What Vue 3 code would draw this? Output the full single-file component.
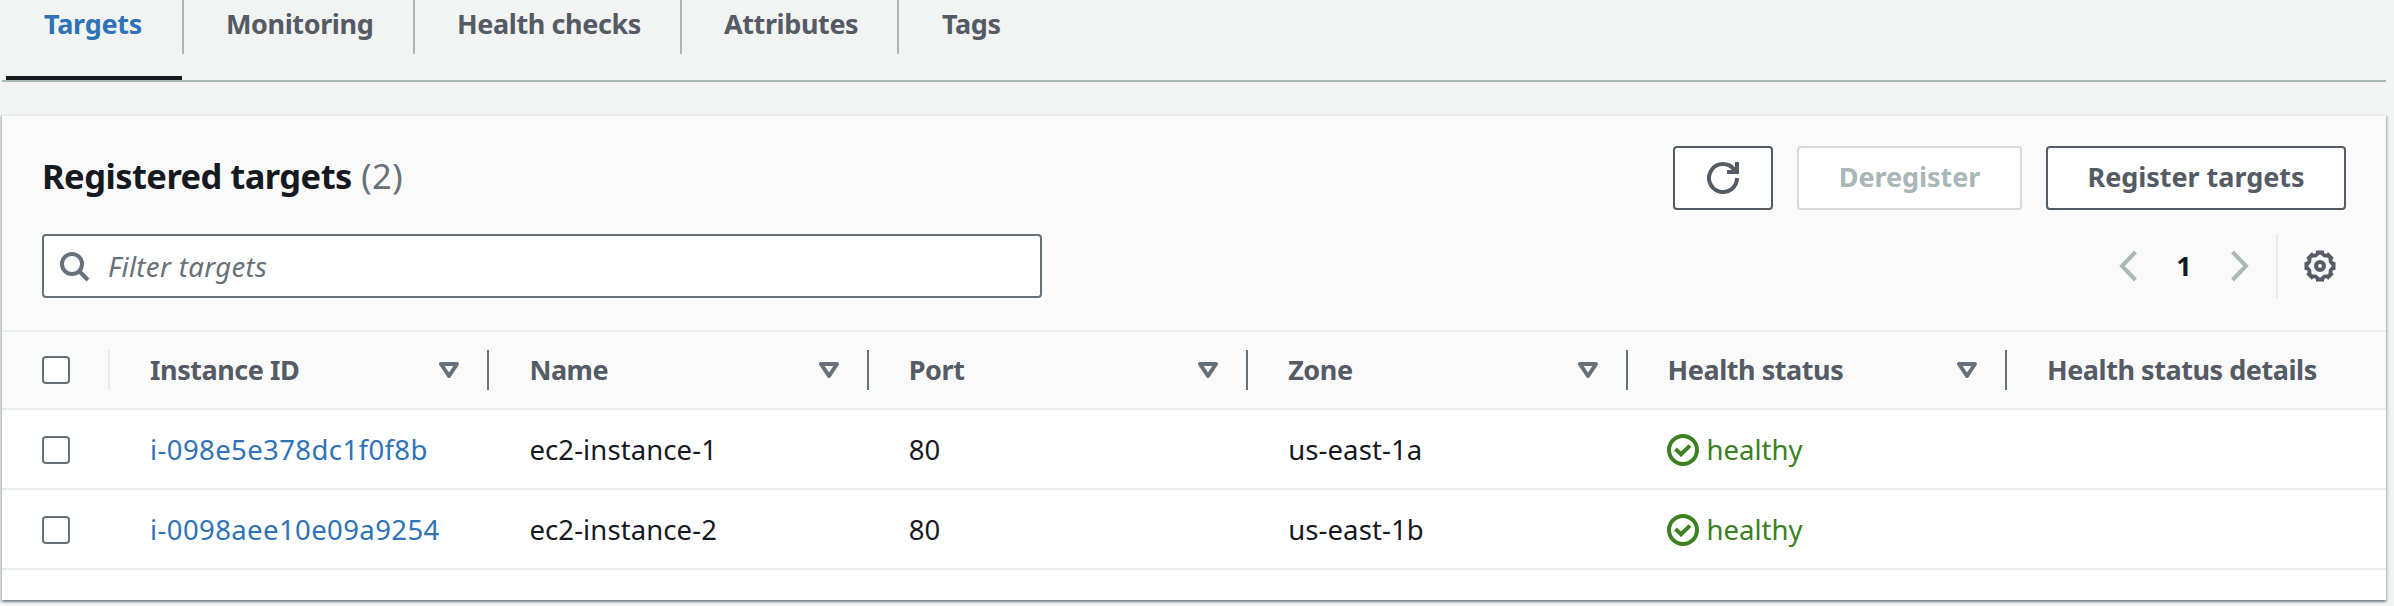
<script setup>
const tabs = ['Targets', 'Monitoring', 'Health checks', 'Attributes', 'Tags']
const columns = ['Instance ID', 'Name', 'Port', 'Zone', 'Health status', 'Health status details']
const targets = [
  { id: 'i-098e5e378dc1f0f8b', name: 'ec2-instance-1', port: 80, zone: 'us-east-1a', status: 'healthy' },
  { id: 'i-0098aee10e09a9254', name: 'ec2-instance-2', port: 80, zone: 'us-east-1b', status: 'healthy' },
]

const point = (radius, degrees) => {
  const a = (degrees * Math.PI) / 180
  return `${(16 + radius * Math.cos(a)).toFixed(2)} ${(16 + radius * Math.sin(a)).toFixed(2)}`
}
const outer = []
const inner = []
for (let a = 0; a < 360; a += 45) {
  outer.push(point(13.6, a - 18), point(16, a - 14), point(16, a + 14), point(13.6, a + 18))
  inner.push(point(11.8, a), point(9.6, a + 22.5))
}
const gearPath = `M${outer.join('L')}ZM${inner.join('L')}Z`
</script>

<template>
  <div class="page">
    <nav class="tabs">
      <a v-for="(tab, i) in tabs" :key="tab" class="tab" :class="{ active: i === 0 }">
        <span class="tab-label">{{ tab }}</span>
      </a>
    </nav>

    <section class="card">
      <header class="head">
        <div class="row">
          <h2 class="title">Registered targets <span class="count">(2)</span></h2>
          <div class="actions">
            <button class="btn refresh" aria-label="Refresh">
              <svg width="32" height="32" viewBox="0 0 32 32" fill="none" stroke="currentColor" stroke-width="4">
                <path d="M30 16A14 14 0 1 1 27.2 7.6" />
                <path d="M30 0V10H20" />
                <path d="M24.5 8.5L29 9.5V6Z" fill="currentColor" stroke="none" />
              </svg>
            </button>
            <button class="btn deregister" disabled><span>Deregister</span></button>
            <button class="btn register"><span>Register targets</span></button>
          </div>
        </div>
        <div class="row filter-row">
          <div class="search">
            <svg width="32" height="32" viewBox="0 0 32 32" fill="none" stroke="currentColor" stroke-width="4">
              <circle cx="13" cy="14" r="10" />
              <path d="M20 21L29 30" />
            </svg>
            <span class="placeholder">Filter targets</span>
          </div>
          <div class="paging">
            <svg class="chev" width="18" height="32" viewBox="0 0 18 32"><path d="M16.5 2L3 16L16.5 30" /></svg>
            <span class="page-no">1</span>
            <svg class="chev" width="18" height="32" viewBox="0 0 18 32"><path d="M1.5 2L15 16L1.5 30" /></svg>
            <span class="settings">
              <svg width="32" height="32" viewBox="0 0 32 32" fill="currentColor">
                <path fill-rule="evenodd" :d="gearPath" />
                <circle cx="16" cy="16" r="4" fill="none" stroke="currentColor" stroke-width="4" />
              </svg>
            </span>
          </div>
        </div>
      </header>

      <div class="grid thead">
        <div class="check"><span class="box"></span></div>
        <div v-for="(c, i) in columns" :key="c" class="th">
          <span>{{ c }}</span>
          <svg v-if="i < 5" class="sort" width="20" height="16" viewBox="0 0 20 16">
            <path d="M2 2H18L10 14Z" />
          </svg>
        </div>
      </div>

      <div v-for="t in targets" :key="t.id" class="grid tr">
        <div class="check"><span class="box"></span></div>
        <div class="td"><a class="link">{{ t.id }}</a></div>
        <div class="td">{{ t.name }}</div>
        <div class="td">{{ t.port }}</div>
        <div class="td">{{ t.zone }}</div>
        <div class="td ok">
          <svg width="32" height="32" viewBox="0 0 32 32" fill="none" stroke="currentColor" stroke-width="4">
            <circle cx="16" cy="16" r="14" />
            <path d="M8.5 15L14 20.2L23 11.6" />
          </svg>
          <span>{{ t.status }}</span>
        </div>
        <div class="td"></div>
      </div>
    </section>
  </div>
</template>

<style>
body { background: #f2f3f3; }
</style>

<style scoped>
.page {
  box-sizing: border-box;
  height: 606px;
  padding: 0 8px 0 2px;
  overflow: hidden;
  background: #f2f3f3;
  color: #16191f;
  font-family: "Noto Sans", "Open Sans", sans-serif;
  font-size: 27.5px;
  font-weight: 450;
  letter-spacing: 0.1px;
}
svg { display: block; flex: none; }
.tabs {
  display: grid;
  grid-template-columns: 178px 231px 267px 217px 140px;
  height: 80px;
  padding-left: 4px;
  border-bottom: 2px solid #aab7b8;
  margin-bottom: 32px;
}
.tab {
  color: #545b64;
  font-size: 27px;
  font-weight: 700;
  letter-spacing: -0.4px;
}
.tab-label {
  display: block;
  box-sizing: border-box;
  height: 54px;
  padding-left: 42px;
  line-height: 47px;
  border-right: 2px solid #aab7b8;
}
.tab:last-child .tab-label { padding-left: 43px; border-right: 0; }
.active .tab-label { padding-left: 38px; letter-spacing: -0.25px; }
.active {
  color: #2e72b8;
  background: linear-gradient(#16191f, #16191f) 0 100% / 176px 4px no-repeat;
}
.card {
  height: 484px;
  background: #fff;
  border-top: 2px solid #eaeded;
  box-shadow: 0 2px 2px 0 rgba(0, 28, 36, 0.3), 2px 2px 2px 0 rgba(0, 28, 36, 0.15), -2px 2px 2px 0 rgba(0, 28, 36, 0.15);
}
.head {
  box-sizing: border-box;
  height: 216px;
  padding: 30px 40px 0;
  background: #fafafa;
  border-bottom: 2px solid #eaeded;
}
.row { display: flex; justify-content: space-between; height: 64px; }
.filter-row { margin-top: 24px; }
.title {
  margin: 0;
  font-size: 34.5px;
  line-height: 59px;
  letter-spacing: -0.55px;
}
.count { margin-left: 1px; color: #687078; font-weight: 450; letter-spacing: 0.5px; }
.actions { display: flex; gap: 24px; }
.btn {
  box-sizing: border-box;
  display: flex;
  align-items: center;
  justify-content: center;
  height: 64px;
  padding: 0;
  background: #fff;
  border: 2px solid #545b64;
  border-radius: 4px;
  color: #545b64;
  font: 700 27px/58px "Noto Sans", "Open Sans", sans-serif;
  letter-spacing: -0.05px;
}
.btn span { padding-bottom: 2px; }
.refresh { width: 100px; }
.deregister { width: 225px; color: #aab7b8; border-color: #d5dbdb; }
.register { width: 300px; }
.search {
  box-sizing: border-box;
  display: flex;
  align-items: center;
  gap: 17px;
  width: 1000px;
  padding-left: 15px;
  background: #fff;
  border: 2px solid #687078;
  border-radius: 4px;
  color: #687078;
}
.placeholder { padding-top: 1px; font-size: 27.5px; font-style: italic; letter-spacing: 0.35px; line-height: 60px; }
.paging { display: flex; align-items: center; }
.chev { fill: none; stroke: #aab7b8; stroke-width: 4; }
.page-no { width: 94px; text-align: center; font-weight: 700; font-size: 27px; line-height: 64px; }
.settings {
  display: flex;
  align-items: center;
  height: 64px;
  margin-left: 27px;
  padding: 0 10px 0 26px;
  border-left: 2px solid #eaeded;
  color: #545b64;
}
.grid { display: grid; grid-template-columns: 108px repeat(5, 379.4px) 1fr; border-bottom: 2px solid #eaeded; }
.thead { height: 76px; align-items: center; background: #fafafa; }
.tr { height: 76px; padding-top: 2px; align-items: center; }
.check { display: flex; align-items: center; box-sizing: border-box; height: 40px; padding-left: 40px; }
.thead .check { border-right: 2px solid #eaeded; }
.box {
  box-sizing: border-box;
  width: 28px;
  height: 28px;
  background: #fff;
  border: 2px solid #687078;
  border-radius: 4px;
}
.th {
  box-sizing: border-box;
  display: flex;
  align-items: center;
  justify-content: space-between;
  height: 40px;
  padding: 0 28px 0 40px;
  border-right: 2px solid #687078;
  color: #545b64;
  font-size: 27px;
  font-weight: 700;
  letter-spacing: -0.45px;
  line-height: 40px;
  white-space: nowrap;
}
.th:last-child { border-right: 0; }
.sort { fill: none; stroke: #687078; stroke-width: 4; stroke-linejoin: round; }
.td { display: flex; align-items: center; gap: 8px; padding-left: 40px; line-height: 40px; white-space: nowrap; }
.link { color: #2e72b8; letter-spacing: 0.4px; }
.ok { padding-left: 39px; color: #3b8021; letter-spacing: 0; }
</style>
